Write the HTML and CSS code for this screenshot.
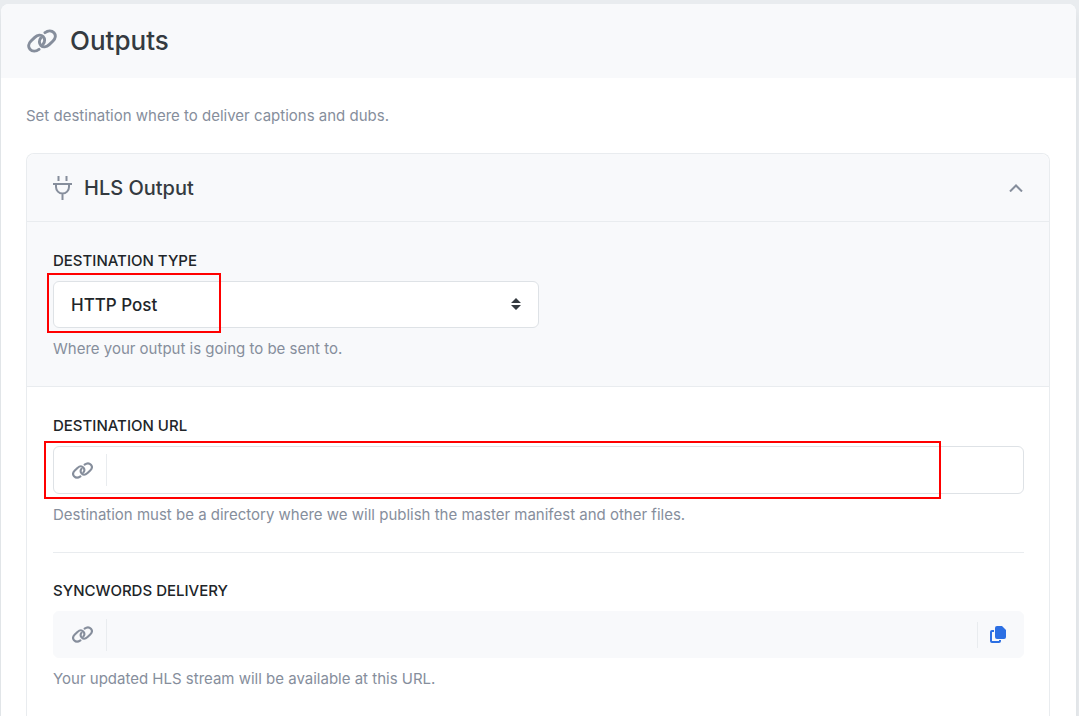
FILE: index.html
```html
<!DOCTYPE html>
<html lang="en">
<head>
  <meta charset="UTF-8" />
  <meta name="viewport" content="width=device-width, initial-scale=1.0"/>
  <title>Outputs</title>
  <link rel="stylesheet" href="styles.css">
</head>
<body>
  <svg class="sprite" aria-hidden="true">
    <symbol id="icon-link" viewBox="0 0 30 24">
      <path d="M18 3.600C21 1.400 24.800 1.400 27 3.800C29.100 6.200 28.500 9.600 26 12L22.200 15.600C19.400 18.200 16 18.600 13.900 16.400C12 14.400 12 11.400 13.700 9.200"/>
      <path d="M12 20.400C9 22.600 5.200 22.600 3 20.200C.9 17.800 1.500 14.400 4 12L7.800 8.400C10.600 5.800 14 5.400 16.100 7.600C18 9.600 18 12.600 16.300 14.800"/>
    </symbol>
  </svg>

  <main class="card">
    <header class="card-header">
      <svg class="icon icon-title" aria-hidden="true"><use href="#icon-link"/></svg>
      <h1>Outputs</h1>
    </header>

    <div class="card-body">
      <p class="intro">Set destination where to deliver captions and dubs.</p>

      <section class="panel">
        <div class="panel-header">
          <svg class="icon icon-plug" viewBox="0 0 19 24" aria-hidden="true">
            <path d="M5.500 0v5M13.500 0v5M0 8h19M3 8v3a6.500 6.500 0 0 0 13 0V8M9.500 17v7"/>
          </svg>
          <h2>HLS Output</h2>
          <button class="toggle" type="button" aria-label="Collapse">
            <svg class="icon icon-chevron" viewBox="0 0 14 8" aria-hidden="true"><path d="M1 7.500l6-6 6 6"/></svg>
          </button>
        </div>

        <div class="section section-type">
          <label for="destType">DESTINATION TYPE</label>
          <div class="select-wrap">
            <select id="destType">
              <option>HTTP Post</option>
            </select>
            <svg class="icon-sort" viewBox="0 0 10 12" aria-hidden="true"><path d="M5 0l5 5H0zM5 12l5-5H0z"/></svg>
            <span class="highlight highlight-type"></span>
          </div>
          <p class="help">Where your output is going to be sent to.</p>
        </div>

        <div class="section">
          <label for="destUrl">DESTINATION URL</label>
          <div class="input-group">
            <span class="addon"><svg class="icon icon-field" aria-hidden="true"><use href="#icon-link"/></svg></span>
            <input type="text" id="destUrl">
            <span class="highlight highlight-url"></span>
          </div>
          <p class="help">Destination must be a directory where we will publish the master manifest and other files.</p>

          <hr>

          <label for="delivery">SYNCWORDS DELIVERY</label>
          <div class="input-group readonly">
            <span class="addon"><svg class="icon icon-field" aria-hidden="true"><use href="#icon-link"/></svg></span>
            <input type="text" id="delivery" readonly>
            <button class="copy" type="button" aria-label="Copy URL">
              <svg class="icon-copy" viewBox="0 0 16 18" aria-hidden="true">
                <path class="back" d="M4 5H2a1 1 0 0 0-1 1v9a1 1 0 0 0 1 1h7a1 1 0 0 0 1-1v-1"/>
                <path d="M7 0h5l4 4v7a2 2 0 0 1-2 2H7a2 2 0 0 1-2-2V2a2 2 0 0 1 2-2z"/>
              </svg>
            </button>
          </div>
          <p class="help">Your updated HLS stream will be available at this URL.</p>
        </div>
      </section>
    </div>
  </main>
</body>
</html>
```

FILE: styles.css
```css
* {
  box-sizing: border-box;
}
body {
  display: flex;
  min-height: 100vh;
  margin: 0;
  padding: 4px 3px 0 1px;
  background-color: #e9ecef;
  color: #343a40;
  font-family: Inter, "Liberation Sans", sans-serif;
  font-size: 15px;
  line-height: 24px;
}
h1, h2, p {
  margin: 0;
}
.sprite {
  position: absolute;
  width: 0;
  height: 0;
}

/* icons */
.icon {
  flex: none;
  fill: none;
  stroke: #868e9c;
  stroke-width: 2;
}
.icon-title, .icon-field {
  stroke-width: 3;
  stroke-linecap: round;
}
.icon-title {
  width: 30px;
  height: 24px;
}
.icon-field {
  width: 21px;
  height: 17px;
}
.icon-plug {
  width: 19px;
  height: 24px;
}
.icon-chevron {
  width: 14px;
  height: 8px;
}

/* card */
.card {
  display: flex;
  flex-direction: column;
  flex: 1;
  background: #fff;
  border-radius: 8px 8px 0 0;
  box-shadow: 0 8px 8px rgba(52, 58, 64, 0.08);
}
.card-header {
  display: flex;
  align-items: center;
  gap: 13px;
  height: 74px;
  padding: 0 26px;
  background: #f8f9fb;
  border-radius: 8px 8px 0 0;
}
h1 {
  font-size: 26px;
  line-height: 32px;
  font-weight: 500;
}
.card-body {
  display: flex;
  flex-direction: column;
  flex: 1;
  padding: 26px 26px 0 25px;
}
.intro, .help {
  color: #868e9c;
}

/* output panel */
.panel {
  flex: 1;
  margin-top: 25px;
  border: 1px solid #e9ecef;
  border-bottom: none;
  border-radius: 8px 8px 0 0;
}
.panel-header {
  display: flex;
  align-items: center;
  gap: 12px;
  height: 68px;
  padding: 0 26px;
  background: #f8f9fb;
  border-bottom: 1px solid #e9ecef;
  border-radius: 8px 8px 0 0;
}
h2 {
  flex: 1;
  font-size: 20px;
  font-weight: 500;
}
.toggle, .copy {
  display: flex;
  align-items: center;
  padding: 0;
  border: none;
  background: none;
  cursor: pointer;
}
.section {
  padding: 27px 25px 25px 26px;
}
.section-type {
  background: #f8f9fb;
  border-bottom: 1px solid #e9ecef;
}
label {
  display: block;
  margin-bottom: 8px;
  color: #212529;
  font-weight: 500;
}
.help {
  margin-top: 9px;
}
hr {
  height: 1px;
  margin: 25px 0 26px;
  border: none;
  background: #e9ecef;
}

/* fields */
.select-wrap {
  position: relative;
  width: 50%;
}
select {
  display: block;
  width: 100%;
  height: 47px;
  padding: 0 17px;
  appearance: none;
  background: #fff;
  border: 1px solid #dee2e6;
  border-radius: 6px;
  color: #212529;
  font-family: inherit;
  font-size: 17px;
  font-weight: 500;
}
.icon-sort {
  position: absolute;
  top: 17px;
  right: 18px;
  width: 10px;
  height: 12px;
  fill: #343a40;
  pointer-events: none;
}
.input-group {
  position: relative;
  display: flex;
  align-items: center;
  height: 48px;
  background: #fff;
  border: 1px solid #dee2e6;
  border-radius: 6px;
}
.input-group.readonly {
  height: 47px;
  background: #f8f9fb;
  border-color: #f8f9fb;
}
.addon {
  display: flex;
  align-items: center;
  justify-content: flex-end;
  width: 53px;
  height: 32px;
  padding-right: 13px;
  border-right: 1px solid #e9ecef;
}
.input-group input {
  flex: 1;
  min-width: 0;
  height: 100%;
  padding: 0 16px;
  border: none;
  background: none;
  font-family: inherit;
  font-size: 17px;
}
.copy {
  height: 26px;
  padding: 0 17px 0 12px;
  border-left: 1px solid #e9ecef;
}
.icon-copy {
  width: 16px;
  height: 18px;
  fill: #2c6fe3;
}
.icon-copy .back {
  fill: none;
  stroke: #2c6fe3;
  stroke-width: 2;
}

/* red callouts */
.highlight {
  position: absolute;
  border: 2px solid #f00;
  pointer-events: none;
}
.highlight-type {
  top: -8px;
  bottom: -5px;
  left: -6px;
  width: 174px;
}
.highlight-url {
  top: -6px;
  right: 82px;
  bottom: -6px;
  left: -10px;
}
```
